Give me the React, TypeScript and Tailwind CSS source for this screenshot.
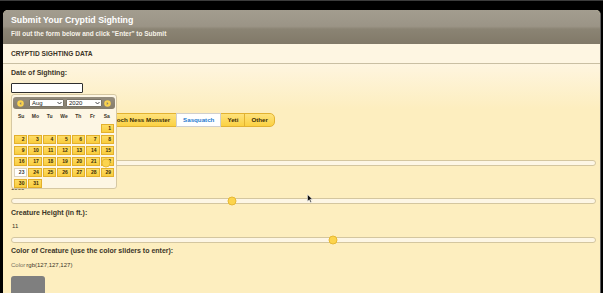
import React from "react";

const days: (number | null)[] = [
  null, null, null, null, null, null, 1,
  2, 3, 4, 5, 6, 7, 8,
  9, 10, 11, 12, 13, 14, 15,
  16, 17, 18, 19, 20, 21, 22,
  23, 24, 25, 26, 27, 28, 29,
  30, 31,
];

function Slider({ pct }: { pct: number }) {
  return (
    <div className="relative h-[6px] rounded-full border border-[#d4c69f] bg-[#fdf6e5]">
      <span
        className="absolute top-1/2 z-20 h-[9px] w-[9px] -translate-x-1/2 -translate-y-1/2 rounded-full border border-[#e7b935] bg-[#fcd44d]"
        style={{ left: `${pct}%` }}
      />
    </div>
  );
}

function NavIcon({ dir }: { dir: "l" | "r" }) {
  return (
    <svg width="7" height="7" viewBox="0 0 14 14">
      <circle cx="7" cy="7" r="6.5" fill="#fbd34e" />
      {dir === "l" ? (
        <path d="M8.5 4 L5 7 L8.5 10 Z" fill="#8a8272" />
      ) : (
        <path d="M5.5 4 L9 7 L5.5 10 Z" fill="#8a8272" />
      )}
    </svg>
  );
}

function FakeSelect({ label, w }: { label: string; w: string }) {
  return (
    <div
      className={`flex h-[8px] items-center justify-between rounded-[1px] border border-[#7a7466] bg-white pl-[2px] pr-[1px] text-[6px] leading-none text-[#222] ${w}`}
    >
      <span>{label}</span>
      <svg width="5" height="4" viewBox="0 0 10 8">
        <path d="M1 2 L5 6 L9 2" stroke="#333" strokeWidth="1.8" fill="none" />
      </svg>
    </div>
  );
}

function DatePicker() {
  return (
    <div className="absolute left-0 top-[11px] z-10 h-[95px] w-[106px] rounded-[3px] border border-[#d6c8a2] bg-[#fdf6e4] px-[1px] pt-[2px]">
      <div className="flex h-[12px] items-center rounded-[3px] bg-[linear-gradient(to_bottom,#958d7d,#857d6c)] pl-[4px] pr-[4px]">
        <NavIcon dir="l" />
        <div className="ml-[5px] flex gap-[2px]">
          <FakeSelect label="Aug" w="w-[35px]" />
          <FakeSelect label="2020" w="w-[36px]" />
        </div>
        <div className="ml-auto">
          <NavIcon dir="r" />
        </div>
      </div>
      <div className="grid h-[15px] grid-cols-7 items-center px-[1px] text-[5px] font-bold text-[#3b3528]">
        {["Su", "Mo", "Tu", "We", "Th", "Fr", "Sa"].map((d) => (
          <span key={d} className="text-center">
            {d}
          </span>
        ))}
      </div>
      <div className="grid grid-cols-7 gap-x-[1px] gap-y-[2px] px-[1px]">
        {days.map((d, i) =>
          d === null ? (
            <span key={i} className="h-[9px]" />
          ) : d === 23 ? (
            <span
              key={i}
              className="flex h-[9px] items-center justify-end border border-[#ddd3bd] bg-white pr-[2px] text-[5px] font-bold leading-none text-[#3b3b3b]"
            >
              {d}
            </span>
          ) : (
            <span
              key={i}
              className="flex h-[9px] items-center justify-end border border-[#e3b02c] bg-[linear-gradient(to_bottom,#fddc66,#f9cd3e)] pr-[2px] text-[5px] font-bold leading-none text-[#3a2c05]"
            >
              {d}
            </span>
          )
        )}
      </div>
    </div>
  );
}

const types = ["Loch Ness Monster", "Sasquatch", "Yeti", "Other"];

export default function App() {
  return (
    <div className="relative h-[293px] w-[603px] overflow-hidden bg-black font-['Liberation_Sans',Arial,sans-serif]">
      <div className="h-[1px] bg-[#3c3c3c]" />
      <div className="pl-[3px] pr-[2px] pt-[9px]">
        <div className="h-[300px] overflow-hidden rounded-t-[5px] border-r border-[#5e5e5e] bg-[#feeebd]">
          {/* header */}
          <div className="h-[34px] bg-[linear-gradient(to_bottom,#a39d8f_0%,#9b9486_48%,#8b8474_56%,#817968_100%)] px-[8px] pt-[4px]">
            <div className="text-[8.8px] font-bold leading-[12px] text-white">Submit Your Cryptid Sighting</div>
            <div className="mt-[4px] text-[6.5px] font-bold leading-[8px] text-[#f6f2e8]">
              Fill out the form below and click "Enter" to Submit
            </div>
          </div>
          {/* section bar */}
          <div className="flex h-[20px] items-center border-b border-[#c9bfa3] bg-[#fef6e2] pl-[8px] text-[6.6px] font-bold text-[#3b3426]">
            CRYPTID SIGHTING DATA
          </div>
          {/* content */}
          <div className="bg-[linear-gradient(to_bottom,#fef5df_0px,#fdeebf_45px)] pl-[8px] pr-[4px] text-[#3b3528]">
            <div className="flex h-[18px] items-center text-[7px] font-bold">Date of Sighting:</div>
            <div className="relative h-[12px]">
              <div className="mt-[1px] h-[10px] w-[72px] rounded-[1px] border border-[#2e2e2e] bg-white" />
              <DatePicker />
            </div>
            <div className="h-[16px]" />
            <div className="flex h-[18px] items-center">
              <div className="flex h-[14px]">
                <span className="w-[96px] rounded-l-[5px] border border-[#e2b232] bg-[#fbd142]" />
                {types.map((t, i) => {
                  const active = t === "Sasquatch";
                  const last = i === types.length - 1;
                  return (
                    <span
                      key={t}
                      className={`-ml-[1px] flex items-center border px-[6px] text-[6.2px] font-bold ${
                        last ? "rounded-r-[5px]" : ""
                      } ${
                        active
                          ? "relative border-[#cfcfcf] bg-white text-[#1f7bcf]"
                          : "border-[#e2b232] bg-[linear-gradient(to_bottom,#fee27c,#fbd142)] text-[#3a2c05]"
                      }`}
                    >
                      {t}
                    </span>
                  );
                })}
              </div>
            </div>
            <div className="h-[28px]" />
            <div className="flex h-[11px] items-center">
              <div className="w-full">
                <Slider pct={16.1} />
              </div>
            </div>
            <div className="h-[14px]" />
            <div className="flex h-[12px] items-center text-[6px]">1000</div>
            <div className="flex h-[14px] items-center">
              <div className="w-full">
                <Slider pct={37.8} />
              </div>
            </div>
            <div className="flex h-[11px] items-center text-[7px] font-bold">Creature Height (in ft.):</div>
            <div className="flex h-[15px] items-center pl-[1px] text-[6px]">11</div>
            <div className="flex h-[12px] items-center">
              <div className="w-full">
                <Slider pct={55} />
              </div>
            </div>
            <div className="flex h-[11px] items-center text-[7px] font-bold">
              Color of Creature (use the color sliders to enter):
            </div>
            <div className="flex h-[17px] items-center gap-[1px] text-[6px]">
              <span className="text-[#77715f]">Color</span>
              <span className="text-[#3b3528]">rgb(127,127,127)</span>
            </div>
            <div className="mt-[2px] h-[30px] w-[34px] rounded-t-[3px] bg-[#7f7f7f]" />
          </div>
        </div>
      </div>
      {/* mouse cursor */}
      <svg className="absolute left-[307px] top-[194px]" width="6" height="9" viewBox="0 0 12 18">
        <path d="M1 1 L1 15 L4.5 11.5 L7 17 L9 16 L6.6 10.6 L11 10.6 Z" fill="#111" stroke="#fff" strokeWidth="1" />
      </svg>
    </div>
  );
}
